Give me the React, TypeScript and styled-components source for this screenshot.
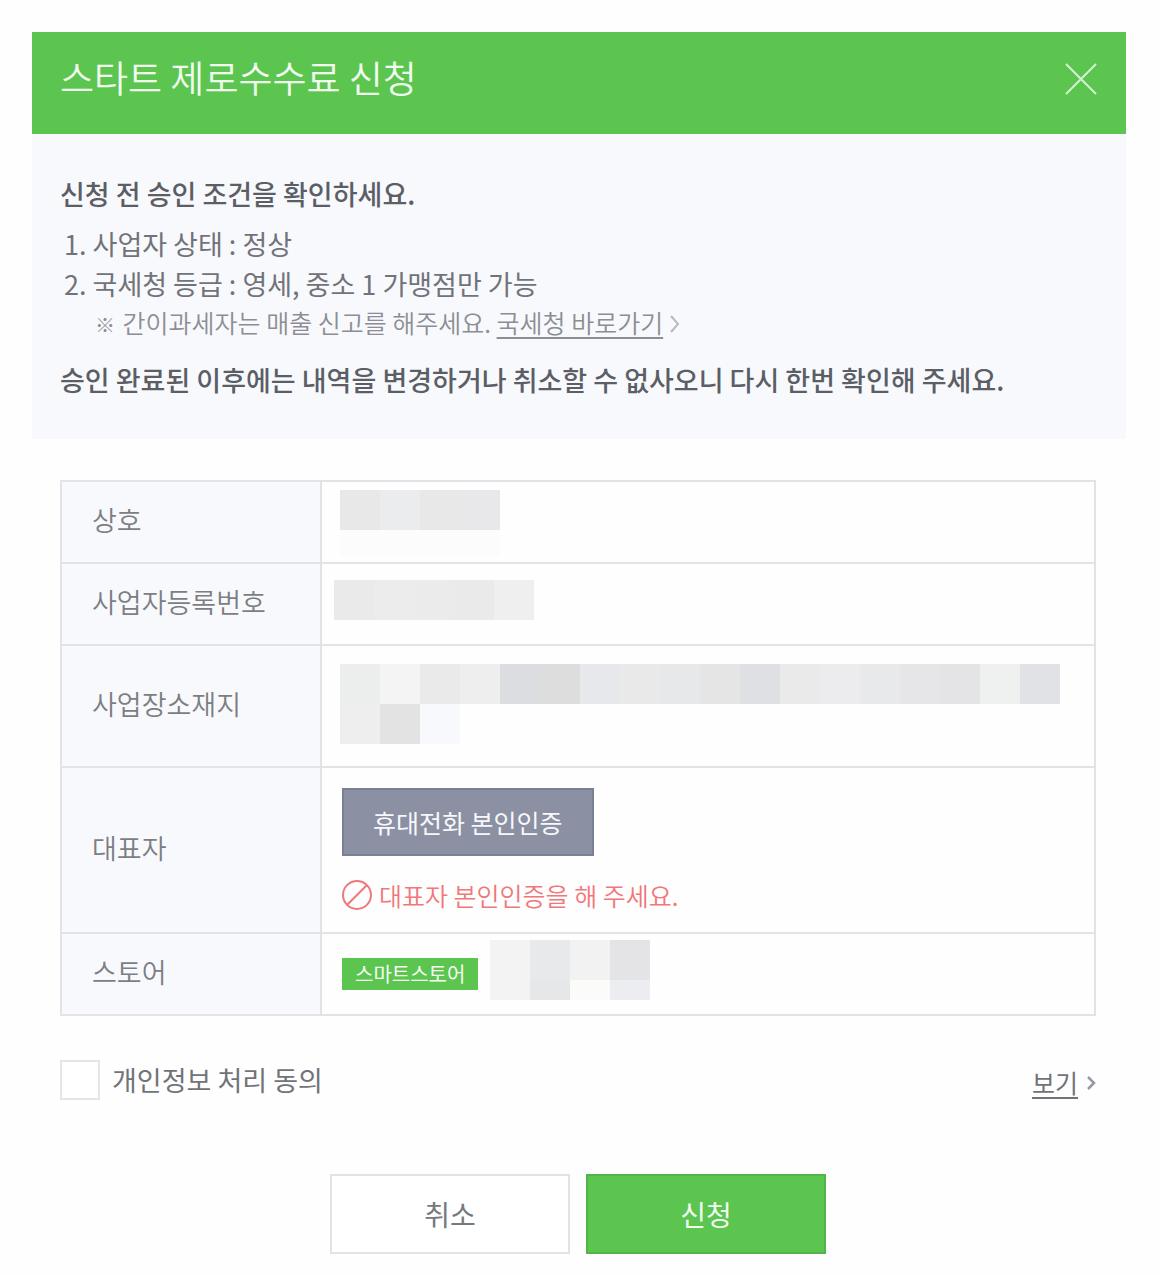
import React from "react";
import styled, { createGlobalStyle } from "styled-components";

const GlobalStyle = createGlobalStyle`
  *, *::before, *::after { box-sizing: border-box; }
  body {
    margin: 0;
    background: #fefefe;
    color: #717379;
    font-family: "Noto Sans CJK KR", sans-serif;
    font-size: 27px;
    line-height: 40px;
  }
  h1, h2, p, ol { margin: 0; padding: 0; }
  button, input { font-family: inherit; margin: 0; }
`;

const Page = styled.div`
  padding: 32px 36px 22px 32px;
`;

const Dialog = styled.main`
  display: flex;
  flex-direction: column;
`;

const Header = styled.header`
  display: flex;
  align-items: center;
  justify-content: space-between;
  height: 102px;
  padding: 0 28px 8px;
  background: #5bc550;
`;

const Title = styled.h1`
  padding-bottom: 4px;
  color: #f0faef;
  font-size: 37px;
  font-weight: 350;
  line-height: 56px;
`;

const CloseButton = styled.button`
  display: flex;
  padding: 0;
  border: 0;
  background: none;
  color: #d5f0d2;
  cursor: pointer;
`;

const Notice = styled.section`
  padding: 40px 28px 39px;
  background: #f8f9fd;
`;

const Strong = styled.h2`
  color: #5c5e66;
  font-size: 27px;
  font-weight: 500;
  line-height: 40px;
`;

const Conditions = styled.ol`
  padding: 10px 0 0 4px;
  list-style: none;
`;

const Hint = styled.p`
  padding: 0 0 20px 35px;
  color: #8c8e93;
  font-size: 25px;
  font-weight: 350;
  line-height: 36px;
`;

const HintMark = styled.span`
  padding-right: 2px;
  font-size: 20px;
  line-height: 20px;
`;

const TextLink = styled.a`
  color: inherit;
  text-decoration: underline;
  text-decoration-thickness: 2px;
  text-underline-offset: 4px;
`;

const Form = styled.form`
  padding: 41px 30px 0 28px;
`;

const Table = styled.table`
  width: 100%;
  border-collapse: collapse;
  table-layout: fixed;
`;

const Row = styled.tr<{ $height: number }>`
  height: ${(p) => p.$height}px;
`;

const Label = styled.th`
  width: 260px;
  padding: 0 30px 4px;
  border: 2px solid #e2e3e6;
  background: #f8f9fd;
  color: #7c7e83;
  font-size: 27px;
  font-weight: 350;
  text-align: left;
`;

const Cell = styled.td<{ $top: number; $left: number }>`
  padding: ${(p) => p.$top}px 20px 0 ${(p) => p.$left}px;
  border: 2px solid #e2e3e6;
  vertical-align: top;
`;

const Mosaic = styled.div`
  display: flex;
  flex-direction: column;
`;

const MosaicRow = styled.div<{ $height: number }>`
  display: flex;
  height: ${(p) => p.$height}px;
`;

const Tile = styled.span<{ $color: string }>`
  flex: 0 1 40px;
  background: ${(p) => p.$color};
`;

const VerifyButton = styled.button`
  display: block;
  height: 68px;
  padding: 0 29px;
  border: 2px solid #7a8094;
  background: #8b90a2;
  color: #f7f8fa;
  font-size: 25px;
  line-height: 36px;
  cursor: pointer;
`;

const ErrorText = styled.p`
  display: flex;
  align-items: center;
  gap: 7px;
  margin-top: 21px;
  color: #f0777a;
  font-size: 25px;
  font-weight: 350;
  line-height: 36px;
`;

const Store = styled.div`
  display: flex;
  align-items: center;
  gap: 12px;
  height: 80px;
`;

const StoreName = styled(Mosaic)`
  width: 160px;
  margin-bottom: 8px;
`;

const Badge = styled.span`
  padding: 0 13px;
  background: #5bc550;
  color: #f6fcf5;
  font-size: 20px;
  line-height: 32px;
`;

const Consent = styled.div`
  display: flex;
  align-items: center;
  justify-content: space-between;
  margin-top: 44px;
`;

const ConsentLabel = styled.label`
  display: flex;
  align-items: center;
  gap: 12px;
`;

const Checkbox = styled.input`
  appearance: none;
  width: 40px;
  height: 40px;
  border: 2px solid #e4e6ea;
  background: #fff;

  &:checked {
    background: #5bc550;
  }
`;

const ViewMore = styled.div`
  display: flex;
  align-items: center;
  gap: 8px;
  padding-top: 4px;
  font-size: 25px;
  line-height: 36px;
`;

const Actions = styled.div`
  display: flex;
  justify-content: center;
  gap: 16px;
  margin-top: 74px;
`;

const ActionButton = styled.button<{ $primary?: boolean }>`
  width: 240px;
  height: 80px;
  padding: 0;
  border: 2px solid ${(p) => (p.$primary ? "#52b548" : "#e2e3e5")};
  background: ${(p) => (p.$primary ? "#5bc550" : "#fff")};
  color: ${(p) => (p.$primary ? "#f0faef" : "#77797e")};
  font-size: 28px;
  line-height: 40px;
  cursor: pointer;
`;

type MosaicLine = { height: number; colors: string[] };

const companyName: MosaicLine[] = [
  { height: 40, colors: ["#e8e8e8", "#ebecee", "#e8e8e8", "#e8e8ea"] },
  { height: 26, colors: ["#fcfcfc", "#fcfcfc", "#fcfcfc", "#fcfcfc"] },
];

const registrationNumber: MosaicLine[] = [
  { height: 40, colors: ["#eaeaea", "#ececec", "#ebebeb", "#eaeaea", "#efefef"] },
];

const address: MosaicLine[] = [
  {
    height: 40,
    colors: [
      "#eceeed", "#f4f4f4", "#eaeaea", "#eeeeee", "#dcdde0", "#dddddd",
      "#e6e8eb", "#e9e9e9", "#e7e8ea", "#e5e5e5", "#dfe0e3", "#eaeaea",
      "#ececee", "#e8e9eb", "#e6e6e8", "#e4e4e6", "#eff0f0", "#e1e2e5",
    ],
  },
  { height: 40, colors: ["#eeeeee", "#e3e3e3", "#f8f9fc"] },
];

const storeName: MosaicLine[] = [
  { height: 40, colors: ["#f3f3f3", "#e8e9eb", "#f2f2f2", "#e4e4e6"] },
  { height: 20, colors: ["#f3f3f3", "#e6e7e9", "#fbfbfa", "#ecedf0"] },
];

const Tiles = ({ lines }: { lines: MosaicLine[] }) => (
  <>
    {lines.map((line, i) => (
      <MosaicRow key={i} $height={line.height}>
        {line.colors.map((color, j) => (
          <Tile key={j} $color={color} />
        ))}
      </MosaicRow>
    ))}
  </>
);

const CloseIcon = () => (
  <svg width="34" height="34" viewBox="0 0 34 34" fill="none" stroke="currentColor" strokeWidth="2" aria-hidden="true">
    <path d="M2 2L32 32M32 2L2 32" />
  </svg>
);

const BanIcon = () => (
  <svg width="30" height="30" viewBox="0 0 30 30" fill="none" stroke="#f0777a" strokeWidth="2" aria-hidden="true">
    <circle cx="15" cy="15" r="14" />
    <path d="M25 5L5 25" />
  </svg>
);

const HintArrow = () => (
  <svg width="12" height="18" viewBox="0 0 12 18" fill="none" stroke="#b9bbbf" strokeWidth="2" aria-hidden="true">
    <path d="M2 1L9 9L2 17" />
  </svg>
);

const ViewArrow = () => (
  <svg width="10" height="16" viewBox="0 0 10 16" fill="none" stroke="#9699a3" strokeWidth="2.5" aria-hidden="true">
    <path d="M2 3L8 9L2 15" />
  </svg>
);

export default function App() {
  return (
    <Page>
      <GlobalStyle />
      <Dialog>
        <Header>
          <Title>스타트 제로수수료 신청</Title>
          <CloseButton type="button" aria-label="닫기">
            <CloseIcon />
          </CloseButton>
        </Header>

        <Notice>
          <Strong>신청 전 승인 조건을 확인하세요.</Strong>
          <Conditions>
            <li>1. 사업자 상태 : 정상</li>
            <li>2. 국세청 등급 : 영세, 중소 1 가맹점만 가능</li>
          </Conditions>
          <Hint>
            <HintMark>※</HintMark> 간이과세자는 매출 신고를 해주세요. <TextLink href="#hometax">국세청 바로가기</TextLink> <HintArrow />
          </Hint>
          <Strong as="p">승인 완료된 이후에는 내역을 변경하거나 취소할 수 없사오니 다시 한번 확인해 주세요.</Strong>
        </Notice>

        <Form onSubmit={(e) => e.preventDefault()}>
          <Table>
            <tbody>
              <Row $height={82}>
                <Label scope="row">상호</Label>
                <Cell $top={8} $left={18}>
                  <Mosaic><Tiles lines={companyName} /></Mosaic>
                </Cell>
              </Row>
              <Row $height={82}>
                <Label scope="row">사업자등록번호</Label>
                <Cell $top={16} $left={12}>
                  <Mosaic><Tiles lines={registrationNumber} /></Mosaic>
                </Cell>
              </Row>
              <Row $height={122}>
                <Label scope="row">사업장소재지</Label>
                <Cell $top={18} $left={18}>
                  <Mosaic><Tiles lines={address} /></Mosaic>
                </Cell>
              </Row>
              <Row $height={166}>
                <Label scope="row">대표자</Label>
                <Cell $top={20} $left={20}>
                  <VerifyButton type="button">휴대전화 본인인증</VerifyButton>
                  <ErrorText role="alert">
                    <BanIcon />
                    대표자 본인인증을 해 주세요.
                  </ErrorText>
                </Cell>
              </Row>
              <Row $height={82}>
                <Label scope="row">스토어</Label>
                <Cell $top={0} $left={20}>
                  <Store>
                    <Badge>스마트스토어</Badge>
                    <StoreName><Tiles lines={storeName} /></StoreName>
                  </Store>
                </Cell>
              </Row>
            </tbody>
          </Table>

          <Consent>
            <ConsentLabel htmlFor="privacy">
              <Checkbox id="privacy" type="checkbox" />
              개인정보 처리 동의
            </ConsentLabel>
            <ViewMore>
              <TextLink href="#privacy-terms">보기</TextLink>
              <ViewArrow />
            </ViewMore>
          </Consent>

          <Actions>
            <ActionButton type="button">취소</ActionButton>
            <ActionButton type="submit" $primary>신청</ActionButton>
          </Actions>
        </Form>
      </Dialog>
    </Page>
  );
}
